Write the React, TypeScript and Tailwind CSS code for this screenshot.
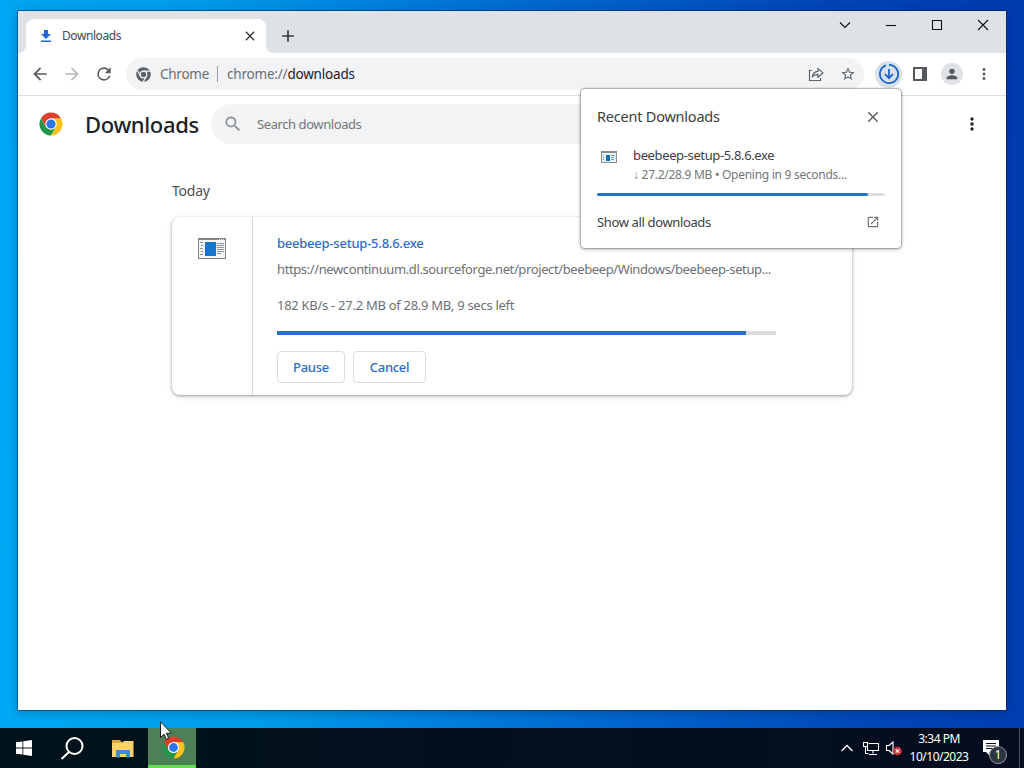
import type { ReactNode } from "react";

type IconProps = {
  className?: string;
};

type GlyphProps = IconProps & {
  d: string;
  viewBox?: string;
};

const Glyph = ({ d, viewBox = "0 0 24 24", className = "size-5" }: GlyphProps) => (
  <svg viewBox={viewBox} fill="currentColor" className={`shrink-0 ${className}`}>
    <path d={d} />
  </svg>
);

const PATHS = {
  back: "M20 11H7.83l5.59-5.59L12 4l-8 8 8 8 1.41-1.41L7.83 13H20v-2z",
  forward: "M12 4l-1.41 1.41L16.17 11H4v2h12.17l-5.58 5.59L12 20l8-8z",
  reload:
    "M17.65 6.35A7.96 7.96 0 0 0 12 4a8 8 0 1 0 7.73 10h-2.08A6 6 0 1 1 12 6c1.66 0 3.14.69 4.22 1.78L13 11h7V4l-2.35 2.35z",
  close: "M19 6.41L17.59 5 12 10.59 6.41 5 5 6.41 10.59 12 5 17.59 6.41 19 12 13.41 17.59 19 19 17.59 13.41 12z",
  plus: "M19 13h-6v6h-2v-6H5v-2h6V5h2v6h6v2z",
  search:
    "M15.5 14h-.79l-.28-.27A6.47 6.47 0 0 0 16 9.5 6.5 6.5 0 1 0 9.5 16c1.61 0 3.09-.59 4.23-1.57l.27.28v.79l5 4.99L20.49 19l-4.99-5zm-6 0C7.01 14 5 11.99 5 9.5S7.01 5 9.5 5 14 7.01 14 9.5 11.99 14 9.5 14z",
  star: "M22 9.24l-7.19-.62L12 2 9.19 8.63 2 9.24l5.46 4.73L5.82 21 12 17.27 18.18 21l-1.63-7.03L22 9.24zM12 15.4l-3.76 2.27 1-4.28-3.32-2.88 4.38-.38L12 6.1l1.71 4.04 4.38.38-3.32 2.88 1 4.28L12 15.4z",
  more: "M12 8c1.1 0 2-.9 2-2s-.9-2-2-2-2 .9-2 2 .9 2 2 2zm0 2c-1.1 0-2 .9-2 2s.9 2 2 2 2-.9 2-2-.9-2-2-2zm0 6c-1.1 0-2 .9-2 2s.9 2 2 2 2-.9 2-2-.9-2-2-2z",
  person: "M12 12a4 4 0 1 0 0-8 4 4 0 0 0 0 8zm0 2c-2.67 0-8 1.34-8 4v2h16v-2c0-2.66-5.33-4-8-4z",
  launch:
    "M19 19H5V5h7V3H5a2 2 0 0 0-2 2v14a2 2 0 0 0 2 2h14c1.1 0 2-.9 2-2v-7h-2v7zM14 3v2h3.59l-9.83 9.83 1.41 1.41L19 6.41V10h2V3h-7z",
};

const ChromeLogo = ({ className = "size-6" }: IconProps) => (
  <svg viewBox="0 0 48 48" className={`shrink-0 ${className}`}>
    <path d="M4.08 12.5A23 23 0 0 0 24 47l9.96-17.25H14.04z" fill="#239549" />
    <path d="M43.92 12.5A23 23 0 0 1 24 47l9.96-17.25L24 12.5z" fill="#fbc31c" />
    <path d="M4.08 12.5A23 23 0 0 1 43.92 12.5H24L14.04 29.75z" fill="#db3f30" />
    <circle cx="24" cy="24" r="11.5" fill="#fff" />
    <circle cx="24" cy="24" r="9.2" fill="#2a76e8" />
  </svg>
);

const ChromeMono = () => (
  <svg viewBox="0 0 24 24" className="size-[17px] shrink-0">
    <circle cx="12" cy="12" r="10.3" fill="#5f6368" />
    <g stroke="#f1f3f4" strokeWidth="1.7" fill="none">
      <circle cx="12" cy="12" r="4.7" />
      <path d="M12 7.3h10M7.9 14.4 2.9 5.7M16.1 14.4l-5.1 8.8" />
    </g>
  </svg>
);

const ExeIcon = ({ className = "h-[21px] w-7" }: IconProps) => (
  <svg viewBox="0 0 28 21" className={`shrink-0 ${className}`} shapeRendering="crispEdges">
    <rect width="28" height="21" fill="#7f868a" />
    <rect x="1" y="2" width="26" height="18" fill="#f4f6f7" />
    <path d="M21 1h1v1h-1zM23 1h1v1h-1zM25 1h1v1h-1z" fill="#e9ecee" />
    <rect x="7" y="4" width="11" height="14" fill="#1477cb" />
    <path
      d="M2 4.5h3M3 7.5h2M2 10.5h3M3 13.5h2M2 16.5h3M19 5.5h7M19 7.5h7M19 9.5h7M19 11.5h7M19 13.5h7M19 15.5h4"
      stroke="#8b959c"
    />
  </svg>
);

const SmallExeIcon = () => (
  <svg viewBox="0 0 16 12" className="h-3 w-4 shrink-0" shapeRendering="crispEdges">
    <rect width="16" height="12" fill="#8b8f8c" />
    <rect x="1" y="2" width="14" height="9" fill="#e6f3f8" />
    <rect x="5" y="4" width="4" height="6" fill="#1470ad" />
    <path d="M2 4.5h1M2 6.5h1M2 8.5h1M10 4.5h4M10 6.5h3M10 8.5h3" stroke="#6f9fb5" />
  </svg>
);

const Tab = () => (
  <div className="relative mt-2 flex h-[34px] w-60 items-center rounded-t-lg bg-white pl-3 pr-2">
    <svg viewBox="0 0 16 16" className="size-4 shrink-0">
      <path d="M6 2h4v4h3l-5 5-5-5h3zM3 12.4h10v1.5H3z" fill="#1b68d2" />
    </svg>
    <span className="ml-2 text-[12px] leading-4 tracking-[-0.42px] text-[#45484c]">Downloads</span>
    <Glyph d={PATHS.close} className="ml-auto size-4 text-[#33363a]" />
    {/* curved feet where the tab meets the toolbar */}
    <span className="absolute -left-2 bottom-0 h-2 w-2 bg-[radial-gradient(circle_at_0_0,transparent_8px,#fff_8px)]" />
    <span className="absolute -right-2 bottom-0 h-2 w-2 bg-[radial-gradient(circle_at_100%_0,transparent_8px,#fff_8px)]" />
  </div>
);

const WINDOW_CONTROLS = [
  "M7 11.5l5 5 5-5",
  "M7 14.5h10",
  "M7.5 9.5h9v9h-9z",
  "M7 9l10 10M17 9L7 19",
];

const TabStrip = () => (
  <div className="flex h-[42px] bg-[#dee1e6] pl-2">
    <Tab />
    <Glyph d={PATHS.plus} className="ml-3 mt-[15px] size-5 text-[#33363a]" />
    <div className="ml-auto flex h-7 text-[#111]">
      {WINDOW_CONTROLS.map((d) => (
        <div key={d} className="flex w-[46px] justify-center">
          <svg viewBox="0 0 24 28" className="h-7 w-6" fill="none" stroke="currentColor" strokeWidth="1.1">
            <path d={d} />
          </svg>
        </div>
      ))}
    </div>
  </div>
);

const Toolbar = () => (
  <div className="flex h-[43px] items-center border-b border-[#dcdee1] bg-white pl-3 pr-[13px]">
    <div className="flex gap-3">
      <Glyph d={PATHS.back} className="size-5 text-[#55585c]" />
      <Glyph d={PATHS.forward} className="size-5 text-[#b9bbbe]" />
      <Glyph d={PATHS.reload} className="size-5 text-[#55585c]" />
    </div>
    <div className="ml-3 flex h-8 w-[738px] items-center rounded-full bg-[#f1f3f4] pl-[9px] pr-2 text-[13.5px] text-[#6a6e73]">
      <ChromeMono />
      <span className="ml-2 w-[49px] tracking-[-0.25px]">Chrome</span>
      <span className="ml-2 mr-[9px] h-4 w-px bg-[#9b9ea2]" />
      <span className="tracking-[-0.2px]">
        chrome://<span className="text-[#202124]">downloads</span>
      </span>
      <svg viewBox="0 0 16 16" className="ml-auto size-4" fill="none" stroke="#5f6368" strokeWidth="1.2">
        <path d="M4 4.500H1.500v10h11v-2.500M4.500 10.500c.4-3.500 2.400-5 5.500-5.200V2.500l5 4.400-5 4.300V8.400c-2.500 0-4 .6-5.500 2.100z" />
      </svg>
      <Glyph d={PATHS.star} className="ml-4 size-4 text-[#5f6368]" />
    </div>
    <div className="ml-auto flex items-center">
      <div className="flex size-[27px] items-center justify-center rounded-full bg-[#d9e0e9]">
        <svg viewBox="0 0 20 20" className="size-5" fill="none" stroke="#1a66cc" strokeWidth="1.8">
          <path d="M10 .9a9.100 9.100 0 1 1-3.100.550" />
          <path d="M10 5v9M6 10.200l4 4 4-4" />
        </svg>
      </div>
      <div className="ml-[11px] h-[14px] w-[14px] border-2 border-r-[5px] border-[#55585c]" />
      <div className="ml-[14px] flex size-[22px] items-center justify-center overflow-hidden rounded-full bg-[#dfe2e6]">
        <Glyph d={PATHS.person} className="size-4 text-[#55585c]" />
      </div>
      <Glyph d={PATHS.more} className="ml-3 size-[18px] text-[#5f6368]" />
    </div>
  </div>
);

const PageHeader = () => (
  <div className="flex h-14 items-center pl-[21px] pr-6">
    <ChromeLogo />
    <h1 className="ml-[22px] w-[126px] text-[22px] font-medium leading-7 tracking-[-0.35px] text-[#202124]">
      Downloads
    </h1>
    <div className="flex h-10 w-[680px] items-center rounded-full bg-[#f1f3f4] pl-3 text-[#74777b]">
      <Glyph d={PATHS.search} className="size-5 text-[#8b8e91]" />
      <span className="ml-3.5 pt-0.5 text-[13px] tracking-[-0.42px]">Search downloads</span>
    </div>
    <Glyph d={PATHS.more} className="ml-auto size-5 text-[#202124]" />
  </div>
);

type ActionButtonProps = {
  children: ReactNode;
  className: string;
};

const ActionButton = ({ children, className }: ActionButtonProps) => (
  <button
    className={`h-8 rounded border border-[#dadce0] text-[13px] font-medium tracking-[-0.3px] text-[#2b6ccb] ${className}`}
  >
    {children}
  </button>
);

const DownloadCard = () => (
  <article className="mt-4 flex h-[178px] w-[680px] rounded-lg bg-white shadow-[0_1px_3px_rgba(60,64,67,.45),0_2px_6px_rgba(60,64,67,.12)]">
    <div className="flex w-[81px] justify-center border-r border-[#d5d6d8] pt-[21px]">
      <ExeIcon />
    </div>
    <div className="flex flex-col pl-6 text-[13px] leading-5 text-[#6d7074]">
      <span className="mt-4 font-medium tracking-[-0.23px] text-[#2b6ccb]">beebeep-setup-5.8.6.exe</span>
      <span className="mt-1.5 whitespace-nowrap tracking-[-0.39px]">
        https://newcontinuum.dl.sourceforge.net/project/beebeep/Windows/beebeep-setup...
      </span>
      <span className="mt-4 tracking-[-0.28px]">182 KB/s - 27.2 MB of 28.9 MB, 9 secs left</span>
      <div className="mt-4 h-1 w-[499px] bg-[#dcdddd]">
        <div className="h-1 w-[94%] bg-[#2472c4]" />
      </div>
      <div className="mt-4 flex gap-2">
        <ActionButton className="w-[68px]">Pause</ActionButton>
        <ActionButton className="w-[73px]">Cancel</ActionButton>
      </div>
    </div>
  </article>
);

const DownloadsPage = () => (
  <main className="flex-1 bg-white">
    <PageHeader />
    <section className="pl-[154px] pt-[29px]">
      <h2 className="text-[14px] leading-5 tracking-[-0.25px] text-[#4d5054]">Today</h2>
      <DownloadCard />
    </section>
  </main>
);

const RecentDownloads = () => (
  <aside className="absolute left-[581px] top-[89px] h-[159px] w-80 rounded bg-white px-4 text-[#3c4043] shadow-[0_0_1px_1px_rgba(60,64,67,.3),0_1px_4px_rgba(0,0,0,.35)]">
    <div className="flex h-14 items-center justify-between">
      <span className="text-[14.5px] tracking-[-0.22px]">Recent Downloads</span>
      <Glyph d={PATHS.close} className="mr-[3px] size-[18px] text-[#5f6368]" />
    </div>
    <div className="flex">
      <div className="ml-1 mt-1.5">
        <SmallExeIcon />
      </div>
      <div className="ml-4 flex flex-col">
        <span className="text-[13px] leading-5 tracking-[-0.37px]">beebeep-setup-5.8.6.exe</span>
        <span className="pt-px text-[12px] leading-[18px] tracking-[-0.28px] text-[#73767a]">
          ↓ 27.2/28.9 MB • Opening in 9 seconds...
        </span>
      </div>
    </div>
    <div className="mt-[9px] h-[3px] rounded-full bg-[#dddede]">
      <div className="h-[3px] w-[94%] rounded-full bg-[#2472c4]" />
    </div>
    <div className="mt-4 flex items-center justify-between">
      <span className="text-[13px] leading-5 tracking-[-0.36px]">Show all downloads</span>
      <Glyph d={PATHS.launch} className="mr-[5px] size-[14px] text-[#6d7074]" />
    </div>
  </aside>
);

const FolderIcon = () => (
  <svg viewBox="0 0 22 19" className="h-[19px] w-[22px]">
    <path d="M0 1h8l1.500 2H21v15H0z" fill="#dba63c" />
    <path d="M0 4h10l2-2h9.500v16H0z" fill="#fad26a" />
    <path d="M4 11h14v7.500h-4V15H8v3.500H4z" fill="#3e8ecb" />
  </svg>
);

const Tray = () => (
  <div className="ml-auto flex h-full items-center text-white">
    <svg viewBox="0 0 14 8" className="h-2 w-3.5" fill="none" stroke="currentColor" strokeWidth="1.3">
      <path d="M1.500 7 7 1.500 12.500 7" />
    </svg>
    <svg viewBox="0 0 18 16" className="ml-2 h-4 w-[18px]" fill="none" stroke="currentColor" strokeWidth="1.1">
      <path d="M6.500 3.500h10v7H5.500V7M11 10.500v3M7 14.500h8M1.500 2.500h4v4h-4zM3.500 6.500v7h3" />
    </svg>
    <svg viewBox="0 0 18 16" className="ml-[5px] h-4 w-[18px]">
      <path d="M1.500 5.500h2.500l4-3.500v12l-4-3.500H1.500z" fill="none" stroke="currentColor" strokeWidth="1.1" />
      <circle cx="12.500" cy="11" r="4.300" fill="#d3343b" />
      <path d="m10.800 9.300 3.400 3.400m0-3.400-3.400 3.400" stroke="#fff" strokeWidth="1.1" />
    </svg>
    <div className="ml-[5px] w-[62px] whitespace-nowrap text-center text-[12px] leading-[18px] tracking-[-0.5px]">
      <div>3:34 PM</div>
      <div>10/10/2023</div>
    </div>
    <div className="relative ml-[11px] h-full w-[38px]">
      <svg viewBox="0 0 16 16" className="ml-0.5 mt-3 size-4">
        <path d="M0 0h16v12H7v4l-4-4H0z" fill="#fff" />
        <path d="M3 3.500h10M3 6h10M3 8.500h7" stroke="#06101f" />
      </svg>
      <span className="absolute left-[9px] top-[19px] flex size-4 items-center justify-center rounded-full bg-[#2c3440] text-[12px] leading-none ring-1 ring-[#8f959c]">
        1
      </span>
    </div>
    <span className="h-full w-px bg-[#47505c]" />
    <span className="w-1" />
  </div>
);

const Taskbar = () => (
  <footer className="flex h-10 items-center bg-gradient-to-r from-[#00121b] to-[#040d1f]">
    <div className="flex w-12 justify-center">
      <svg viewBox="0 0 16 16" className="size-4" fill="#fff">
        <path d="M0 2.300 6.500 1.400v6.100H0zM7.300 1.300 16 0v7.500H7.300zM0 8.400h6.500v6.200L0 13.700zM7.300 8.400H16V16l-8.700-1.300z" />
      </svg>
    </div>
    <div className="flex w-12 justify-center">
      <svg viewBox="0 0 24 24" className="size-6" fill="none" stroke="#fff" strokeWidth="2">
        <circle cx="14.500" cy="10" r="8" />
        <path d="M9 16 1.500 23" />
      </svg>
    </div>
    <div className="flex w-[52px] justify-center pl-0.5">
      <FolderIcon />
    </div>
    <div className="flex h-full w-12 items-center justify-center border-b-[3px] border-[#62df4e] bg-[#4c8057] pl-0.5">
      <ChromeLogo className="mt-0.5 size-[23px]" />
    </div>
    <Tray />
  </footer>
);

const Cursor = () => (
  <svg viewBox="0 0 12 19" className="absolute left-[160px] top-[721px] h-[19px] w-3">
    <path d="M.5.8v15.700l3.600-3.400 2.300 5.200 2.300-1-2.300-5.100h5z" fill="#fff" stroke="#111" strokeWidth=".9" />
  </svg>
);

export default function App() {
  return (
    <div className="relative flex h-[768px] w-[1024px] flex-col overflow-hidden bg-[linear-gradient(85deg,#00a9f5_0%,#009ceb_24%,#0069d0_55%,#0045b6_82%,#003bb0_100%)] font-['Noto_Sans','Open_Sans',sans-serif]">
      <div className="mx-[18px] mb-[18px] mt-[11px] flex flex-1 flex-col shadow-[0_0_0_1px_rgba(0,25,65,.45),0_2px_10px_rgba(0,20,60,.3)]">
        <TabStrip />
        <Toolbar />
        <DownloadsPage />
      </div>
      <RecentDownloads />
      <Taskbar />
      <Cursor />
    </div>
  );
}
